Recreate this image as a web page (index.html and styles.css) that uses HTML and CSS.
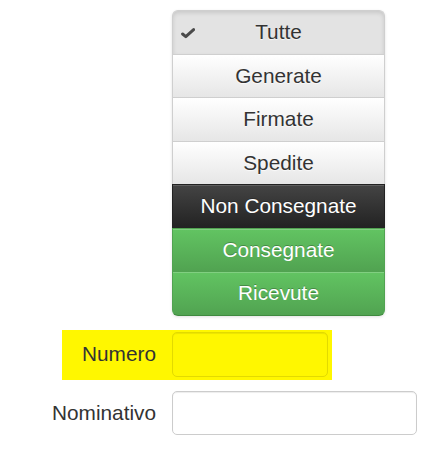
FILE: index.html
```html
<!DOCTYPE html>
<html lang="it">
<head>
<meta charset="utf-8">
<title>Filtro</title>
<link rel="stylesheet" href="styles.css">
</head>
<body>
<form class="form">
  <div class="row row-list">
    <div class="label"></div>
    <div class="btn-group">
      <button type="button" class="btn btn-active">
        <svg class="check" viewBox="0 0 14 12" width="14" height="12"><path d="M1.6 7 L4.8 9.6 L12.6 2.6" fill="none" stroke="#4a4a4a" stroke-width="3" stroke-linecap="round" stroke-linejoin="round"/></svg>
        Tutte
      </button>
      <button type="button" class="btn">Generate</button>
      <button type="button" class="btn">Firmate</button>
      <button type="button" class="btn">Spedite</button>
      <button type="button" class="btn btn-inverse">Non Consegnate</button>
      <button type="button" class="btn btn-success">Consegnate</button>
      <button type="button" class="btn btn-success">Ricevute</button>
    </div>
  </div>
  <div class="row row-hl">
    <div class="hl">
      <label class="label label-hl" for="numero">Numero</label>
      <input id="numero" class="input input-num" type="text">
    </div>
  </div>
  <div class="row row-nom">
    <label class="label" for="nominativo">Nominativo</label>
    <input id="nominativo" class="input input-nom" type="text">
  </div>
</form>
</body>
</html>
```
FILE: styles.css
```css
html, body {
  margin: 0;
  padding: 0;
  background: #fff;
}
body {
  font-family: "Liberation Sans", Arial, sans-serif;
  font-size: 20.8px;
  color: #333;
}
.form {
  margin: 0;
  padding-top: 10px;
}
.row {
  display: flex;
  align-items: center;
  gap: 16px;
}
.label {
  flex: none;
  width: 156px;
  text-align: right;
  color: #333;
  font-size: 20.8px;
}
.btn-group {
  display: flex;
  flex-direction: column;
  width: 213px;
  border-radius: 6px;
  box-shadow: 0 1px 3px rgba(0,0,0,0.12);
}
.btn {
  position: relative;
  display: block;
  box-sizing: border-box;
  width: 100%;
  height: 44.5px;
  margin: -1px 0 0 0;
  padding: 0;
  font-family: inherit;
  font-size: 20.8px;
  line-height: 42px;
  color: #333;
  text-align: center;
  text-shadow: 0 1px 1px rgba(255,255,255,0.75);
  background: linear-gradient(to bottom, #ffffff, #e6e6e6);
  border: 1px solid #cfcfcf;
  border-bottom-color: #c4c4c4;
  box-shadow: inset 0 1px 0 rgba(255,255,255,0.2);
  border-radius: 0;
}
.btn:first-child {
  margin-top: 0;
  border-radius: 6px 6px 0 0;
}
.btn:last-child {
  border-radius: 0 0 6px 6px;
}
.btn-active {
  background: #e3e3e3;
  box-shadow: inset 0 2px 4px rgba(0,0,0,0.12);
}
.check {
  position: absolute;
  left: 8px;
  top: 16px;
}
.btn-inverse {
  color: #fff;
  text-shadow: 0 -1px 0 rgba(0,0,0,0.25);
  background: linear-gradient(to bottom, #444444, #222222);
  border-color: #222 #222 #111;
  box-shadow: inset 0 1px 0 rgba(255,255,255,0.15);
}
.btn-success {
  color: #fff;
  text-shadow: 0 -1px 0 rgba(0,0,0,0.25);
  background: linear-gradient(to bottom, #62c462, #51a351);
  border-color: #51a351 #51a351 #3f8a3f;
  box-shadow: inset 0 1px 0 rgba(255,255,255,0.2);
}
.row-hl {
  margin-top: 14px;
}
.hl {
  display: flex;
  align-items: center;
  gap: 16px;
  background: #fff700;
  margin-left: 62px;
  padding: 2px 4px 3px 0;
}
.label-hl {
  width: 94px;
}
.input {
  box-sizing: border-box;
  margin: 0;
  padding: 4px 8px;
  font-family: inherit;
  font-size: 20.8px;
  border: 1px solid #ccc;
  border-radius: 5px;
  background: #fff;
  box-shadow: inset 0 1px 1px rgba(0,0,0,0.075);
  outline: none;
}
.input-num {
  width: 156px;
  height: 45px;
  background: #fff700;
  border-color: #e2da00;
}
.row-nom {
  margin-top: 11px;
}
.input-nom {
  width: 245px;
  height: 44px;
}
```
